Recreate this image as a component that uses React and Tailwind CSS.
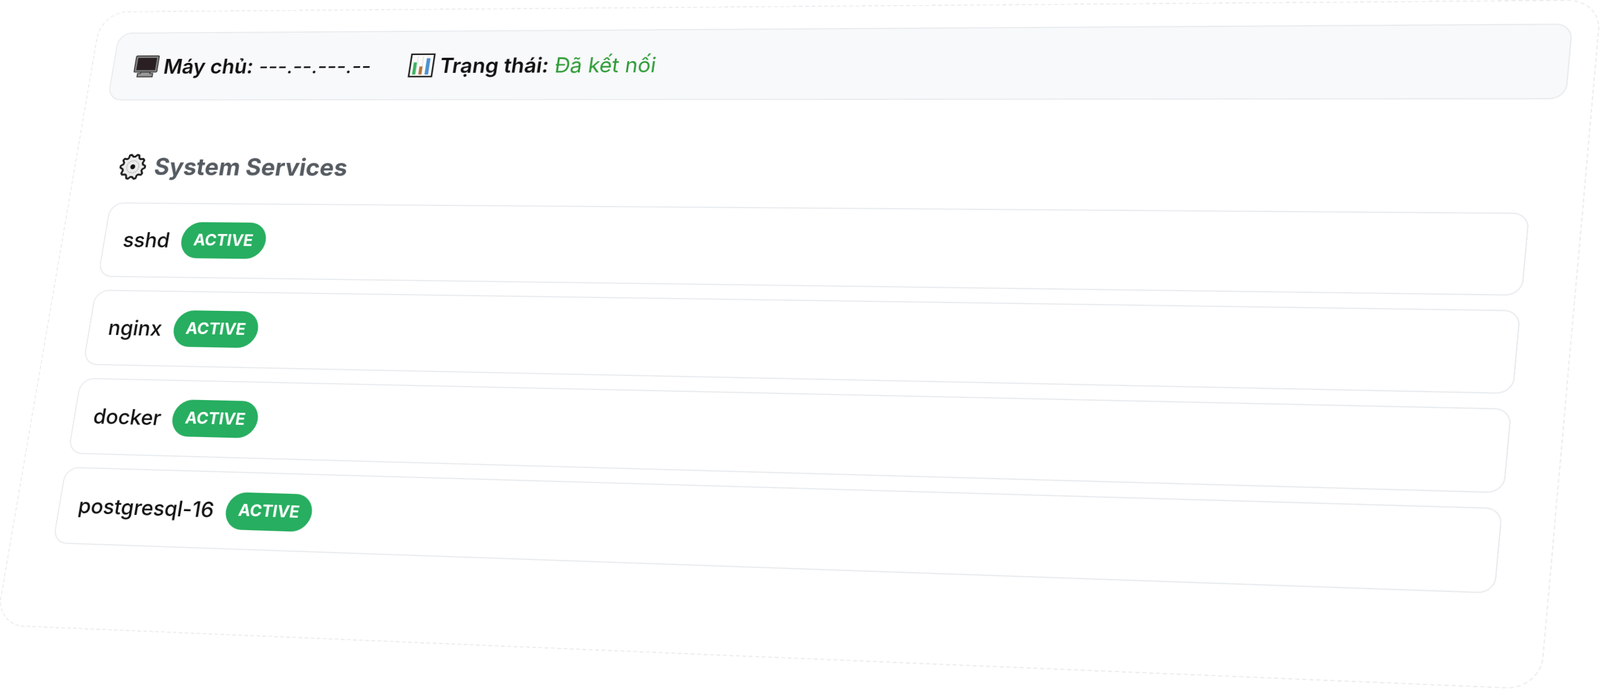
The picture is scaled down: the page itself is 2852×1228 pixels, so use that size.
const inter = { fontFamily: "Inter, 'Noto Sans', sans-serif" };

const services = [
  { name: "sshd" },
  { name: "nginx" },
  { name: "docker" },
  { name: "postgresql-16" },
];

// gear outline with rounded-ish teeth
const gearPoints = Array.from({ length: 40 }, (_, i) => {
  const step = i % 4;
  const r = step === 0 || step === 1 ? 11.2 : 9.2;
  const angle = ((i - 0.5) * Math.PI * 2) / 40;
  return `${(12 + r * Math.cos(angle)).toFixed(2)},${(12 + r * Math.sin(angle)).toFixed(2)}`;
}).join(" ");

function MonitorIcon() {
  return (
    <svg viewBox="0 0 26 24" className="w-[44px] h-[40px] shrink-0">
      <rect x="1" y="1" width="24" height="17" rx="1" fill="#8a8a8a" stroke="#333" strokeWidth="1" />
      <rect x="3" y="3" width="20" height="13" fill="#2a2024" />
      <path d="M8 18h10v1.5h3V23H5v-3.500h3z" fill="#999" stroke="#333" strokeWidth="1" />
    </svg>
  );
}

function ChartIcon() {
  return (
    <svg viewBox="0 0 24 24" className="w-[42px] h-[42px] shrink-0">
      <rect x="1" y="1" width="22" height="22" fill="#fbfbfb" stroke="#1a1a1a" strokeWidth="1.500" />
      <path d="M7.500 3v18M12.500 3v18M17.500 3v18" stroke="#e6e6e6" strokeWidth="1" />
      <rect x="4" y="9" width="3" height="12" fill="#3ab561" />
      <rect x="10" y="13" width="3" height="8" fill="#b5743c" />
      <rect x="16" y="5" width="3.500" height="16" fill="#4e93d1" />
    </svg>
  );
}

function GearIcon() {
  return (
    <svg viewBox="0 0 24 24" className="w-[46px] h-[46px] shrink-0">
      <polygon points={gearPoints} fill="#ececec" stroke="#1c1c1c" strokeWidth="1.700" strokeLinejoin="round" />
      <circle cx="12" cy="12" r="5.500" fill="none" stroke="#b0b0b0" strokeWidth="0.800" strokeDasharray="1 0.600" />
      <circle cx="12" cy="12" r="2.200" fill="#111" />
    </svg>
  );
}

function ServiceRow({ name }) {
  return (
    <div className="flex items-center gap-[20px] h-[129px] ml-[36px] mr-[37px] px-[32px] rounded-[24px] border-2 border-[#e9ecef] bg-white">
      <span className="text-[35.2px] font-medium text-[#111]">{name}</span>
      <span className="flex items-center justify-center h-[62px] px-[21.500px] rounded-full bg-[#27ae60] text-[27.2px] font-bold text-white">
        ACTIVE
      </span>
    </div>
  );
}

export default function App() {
  return (
    <div style={inter} className="w-[2852px] h-[1228px] overflow-hidden bg-white">
      <div className="w-[2388px] h-[1058px] origin-top-left [transform:matrix3d(0.992,-0.008873,0,-0.00004496,-0.17745,0.99998,0,-0.00003113,0,0,1,0,180,20.3,0,1)] rounded-[48px] border-2 border-dashed border-[#eceef1] bg-white px-[36px] pt-[36px]">
        <div className="flex items-center h-[120px] px-[35px] rounded-[24px] border-2 border-[#e9ecef] bg-[#f8f9fa] text-[35.2px] text-[#111]">
          <div className="flex items-center gap-[9px]">
            <MonitorIcon />
            <span><b className="font-semibold">Máy chủ:</b> ---.--.---.--</span>
          </div>
          <div className="flex items-center gap-[10px] ml-[64px]">
            <ChartIcon />
            <span><b className="font-semibold">Trạng thái:</b> <span className="text-[#2e9c38]">Đã kết nối</span></span>
          </div>
        </div>

        <div className="flex items-center gap-[15px] h-[60px] mt-[86px] mb-[31.500px] ml-[42px]">
          <GearIcon />
          <span className="text-[40.500px] font-bold text-[#555b61]">System Services</span>
        </div>

        <div className="flex flex-col gap-[22.200px]">
          {services.map((s) => (
            <ServiceRow key={s.name} name={s.name} />
          ))}
        </div>
      </div>
    </div>
  );
}
